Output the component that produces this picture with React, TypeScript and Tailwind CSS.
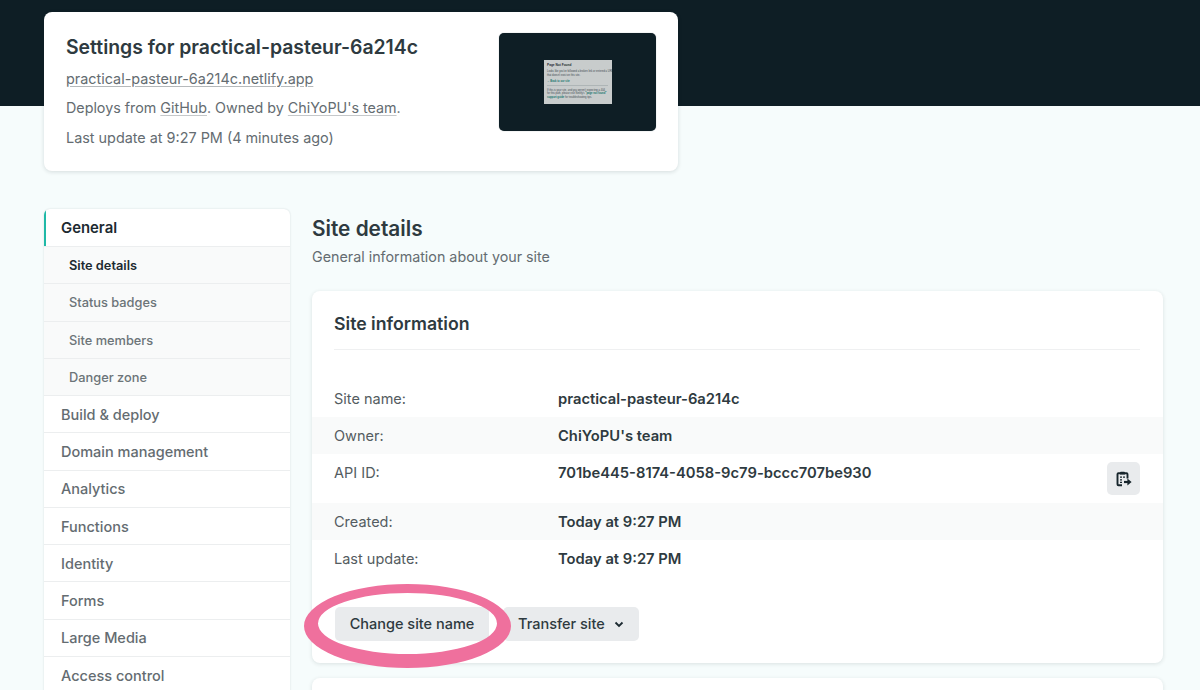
const navTop = ["Build & deploy", "Domain management", "Analytics", "Functions", "Identity", "Forms", "Large Media", "Access control"];
const navSub = ["Status badges", "Site members", "Danger zone"];

function Info({ label, value, shaded, action }: { label: string; value: string; shaded?: boolean; action?: boolean }) {
  return (
    <div className={`flex pl-[22px] pr-[23px] ${action ? "h-[49px] items-start pt-[8px]" : "h-[37px] items-center pt-[1px]"} ${shaded ? "bg-[#f9fafa]" : ""}`}>
      <span className="w-[224px] text-[14.5px] text-[#545c61]">{label}</span>
      <span className="flex-1 text-[14.75px] font-semibold text-[#2e3a40]">{value}</span>
      {action && (
        <button className="flex h-[33px] w-[33px] items-center justify-center rounded-[5px] bg-[#e9ebed]">
          <svg width="18" height="18" viewBox="0 0 18 18" fill="none">
            <path d="M7 15.2H3.4c-.5 0-.9-.4-.9-.9V4.2c0-.5.4-.9.9-.9h8.2c.5 0 .9.4.9.9v4.3" stroke="#18262d" strokeWidth="1.9" />
            <path d="M5 4.5V2.6c0-.5.4-.9.9-.9h3.2c.5 0 .9.4.9.9v1.9z" fill="#18262d" />
            <path d="M5 7.2h2M8 7.2h2M5 9.8h2M5 12.4h2" stroke="#18262d" strokeWidth="1.3" />
            <path d="M9 12h4" stroke="#18262d" strokeWidth="2.2" />
            <path d="M12.4 8.6l4.2 3.4-4.2 3.4z" fill="#18262d" />
          </svg>
        </button>
      )}
    </div>
  );
}

export default function App() {
  return (
    <div className="relative h-[690px] w-[1200px] overflow-hidden bg-[#f6fcfc] font-['Inter',sans-serif]">
      <div className="h-[106px] bg-[#0e1e25] px-[44px] pt-[12px]">
        {/* Site header card */}
        <div className="flex h-[159px] w-[634px] justify-between rounded-[8px] bg-white px-[22px] pt-[21px] shadow-[0_1px_4px_rgba(14,30,37,0.14)]">
          <div>
            <h1 className="text-[19.4px] leading-[28px] font-semibold text-[#2e3a40]">Settings for practical-pasteur-6a214c</h1>
            <p className="mt-[6px] text-[14.4px] leading-[24px] text-[#646c71] underline decoration-[#b5b9bb] underline-offset-2">practical-pasteur-6a214c.netlify.app</p>
            <p className="mt-[5px] text-[14.3px] leading-[24px] text-[#646c71]">
              Deploys from <span className="underline decoration-[#c5c8ca] underline-offset-2">GitHub</span>. Owned by <span className="underline decoration-[#c5c8ca] underline-offset-2">ChiYoPU's team</span>.
            </p>
            <p className="mt-[6px] text-[14.4px] leading-[24px] text-[#646c71]">Last update at 9:27 PM (4 minutes ago)</p>
          </div>
          {/* Screenshot thumbnail of the deployed site */}
          <div className="flex h-[98px] w-[157px] items-center justify-center rounded-[5px] bg-[#0e1e25]" style={{ boxShadow: "0 0 1px #8a9499" }}>
            <div className="h-[44px] w-[68px] overflow-hidden whitespace-nowrap bg-[#c8cccc] pl-[3.5px] pt-[4px] font-['Liberation_Sans',sans-serif] text-[2.6px] leading-[3.5px] text-[#3f4a50]">
              <p className="text-[3.2px] font-bold text-[#1f2a30]">Page Not Found</p>
              <p className="mt-[2.5px]">Looks like you've followed a broken link or entered a URL</p>
              <p>that doesn't exist on this site.</p>
              <p className="mt-[3px] font-bold text-[#17756d]">← Back to our site</p>
              <div className="mr-[3.5px] mt-[1.5px] h-px bg-[#aeb5b6]" />
              <p className="mt-[2.5px]">If this is your site, and you weren't expecting a 404</p>
              <p>for this path, please visit Netlify's <span className="font-bold text-[#17756d]">"page not found"</span></p>
              <p><span className="font-bold text-[#17756d]">support guide</span> for troubleshooting tips.</p>
            </div>
          </div>
        </div>
      </div>

      <div className="flex gap-[22.5px] pl-[44px] pt-[103px]">
        {/* Sidebar */}
        <nav className="w-[245.5px] shrink-0 overflow-hidden rounded-[6px] bg-white shadow-[0_0_2px_rgba(14,30,37,0.16)]">
          <div className="flex h-[37px] items-center border-l-2 border-[#1fb9a7] pl-[15px] pt-[1px] text-[14.9px] font-semibold text-[#1c2a31]">General</div>
          <div className="flex h-[37.25px] items-center border-t border-[#eceeef] bg-[#f9fafa] pl-[25px] pt-[1px] text-[12.8px] font-semibold text-[#1c2a31]">Site details</div>
          {navSub.map((item) => (
            <div key={item} className="flex h-[37.25px] items-center border-t border-[#eceeef] bg-[#f9fafa] pl-[25px] pt-[1px] text-[12.8px] font-medium text-[#6c7478]">{item}</div>
          ))}
          {navTop.map((item) => (
            <div key={item} className="flex h-[37.25px] items-center border-t border-[#eceeef] pl-[17px] pt-[1px] text-[14.5px] font-medium text-[#646c71]">{item}</div>
          ))}
        </nav>

        {/* Main column */}
        <main className="w-[851px]">
          <h2 className="pt-[1px] text-[20.8px] leading-[37px] font-semibold text-[#2e3a40]">Site details</h2>
          <p className="text-[14.3px] leading-[20px] text-[#646c71]">General information about your site</p>
          <section className="mt-[24px] h-[372px] rounded-[8px] bg-white shadow-[0_1px_4px_rgba(14,30,37,0.12)]">
            <div className="ml-[22px] mr-[23px] h-[59px] border-b border-[#eff0f1] pt-[20px]">
              <h3 className="text-[17.7px] leading-[26px] font-semibold text-[#2e3a40]">Site information</h3>
            </div>
            <div className="pt-[30px]">
              <Info label="Site name:" value="practical-pasteur-6a214c" />
              <Info label="Owner:" value="ChiYoPU's team" shaded />
              <Info label="API ID:" value="701be445-8174-4058-9c79-bccc707be930" action />
              <Info label="Created:" value="Today at 9:27 PM" shaded />
              <Info label="Last update:" value="Today at 9:27 PM" />
            </div>
            <div className="mt-[30px] flex gap-[14px] pl-[23px]">
              <button className="h-[34px] w-[154px] rounded-[5px] bg-[#e9ebed] text-[14.5px] font-medium text-[#2e3a40]">Change site name</button>
              <button className="flex h-[34px] w-[136px] items-center gap-[9px] rounded-[5px] bg-[#e9ebed] pl-[15px] text-[14.5px] font-medium text-[#2e3a40]">
                Transfer site
                <svg width="10" height="7" viewBox="0 0 10 7" fill="none"><path d="M1.5 1.5L5 5l3.5-3.5" stroke="#1c2a31" strokeWidth="1.8" /></svg>
              </button>
            </div>
          </section>
          <section className="mt-[15px] h-[80px] rounded-[8px] bg-white shadow-[0_1px_4px_rgba(14,30,37,0.12)]" />
        </main>
      </div>

      {/* Pink annotation ring: thinner along the top, so two ellipses rather than one stroke */}
      <svg className="absolute left-[304px] top-[584px]" width="207" height="84" viewBox="0 0 207 84">
        <path
          fillRule="evenodd"
          fill="#ef709d"
          d="M0 42a103.5 42 0 1 0 207 0a103.5 42 0 1 0-207 0zM14 39.5a89.5 30.5 0 1 0 179 0a89.5 30.5 0 1 0-179 0z"
        />
      </svg>
    </div>
  );
}
